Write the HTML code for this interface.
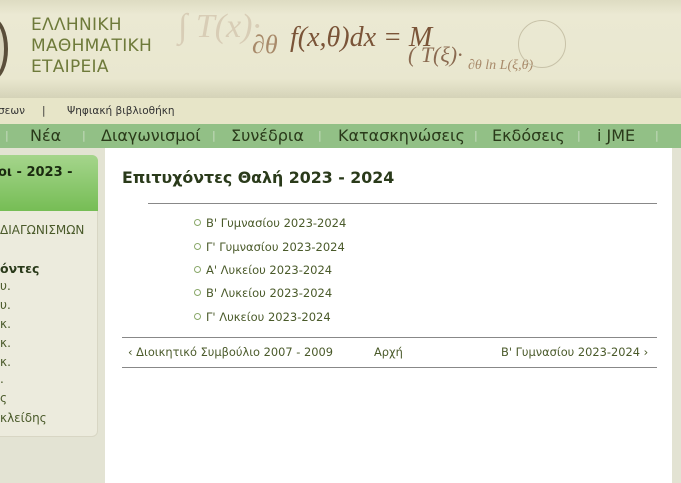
<!DOCTYPE html>
<html><head><meta charset="utf-8"><style>
*{margin:0;padding:0;box-sizing:border-box}
body{width:681px;height:483px;overflow:hidden;background:#e3e3d3;font-family:"DejaVu Sans","Liberation Sans",sans-serif;position:relative}
.hdr{position:absolute;left:0;top:0;width:681px;height:98px;background:linear-gradient(180deg,#dedcc2 0%,#ebe9d3 15%,#e9e7cf 80%,#d5d3b8 100%)}
.logo{position:absolute;left:-22px;top:18px;width:30px;height:62px;border-radius:50%;border:4px solid #5a4e3a;background:#d8d4bc}
.title{position:absolute;left:31px;top:15px;color:#6e7a3a;font-size:17px;line-height:21px;font-family:"DejaVu Sans",sans-serif;letter-spacing:.3px}
.f{position:absolute;font-family:"Liberation Serif",serif;font-style:italic;color:#7a5a40}
.sub{position:absolute;left:0;top:98px;width:681px;height:26px;background:#e7e5c8;font-size:10.5px;color:#333;line-height:26px}
.nav{position:absolute;left:0;top:124px;width:681px;height:24px;background:#92c086;font-size:16px;color:#2a3a1a;line-height:24px}
.nav span{position:absolute;top:0}
.sep{color:#c8dcc0;font-size:11px}
.side{position:absolute;left:-10px;top:155px;width:108px;height:282px;background:#ecebdd;border:1px solid #d8d6c4;border-radius:6px}
.sideh{position:absolute;left:0;top:155px;width:98px;height:56px;background:linear-gradient(#a5d58c,#76bd55);border-radius:0 6px 0 0;font-weight:bold;font-size:13px;color:#1a2a10;padding:10px 0 0 0}
.sl{position:absolute;left:0;font-size:12px;color:#4a5a2a}
.main{position:absolute;left:105px;top:148px;width:567px;height:335px;background:#fff}
h1{position:absolute;left:122px;top:168px;font-size:15.8px;font-weight:bold;color:#2a3a1a;font-family:"DejaVu Sans",sans-serif}
.hr{position:absolute;height:1px;background:#888}
.li{position:absolute;left:194px;font-size:11.5px;color:#4a5a2a}
.li i{display:inline-block;width:7px;height:7px;border:1.5px solid #8aa86a;border-radius:50%;margin-right:5px;vertical-align:1px}
.pn{position:absolute;top:345px;font-size:11.4px;color:#4a5a2a}
</style></head><body>
<div class="hdr">
<div class="logo"></div>
<div class="title">ΕΛΛΗΝΙΚΗ<br>ΜΑΘΗΜΑΤΙΚΗ<br>ΕΤΑΙΡΕΙΑ</div>
<div class="f" style="left:178px;top:8px;font-size:34px;color:#d8cdb6">∫ T(x)·</div>
<div class="f" style="left:252px;top:30px;font-size:26px;color:#a88a6a">∂θ</div>
<div class="f" style="left:290px;top:22px;font-size:28px;color:#7a5438">f(x,θ)dx = M</div>
<div class="f" style="left:408px;top:42px;font-size:22px;color:#8a6a50">( T(ξ)·</div>
<div class="f" style="left:468px;top:58px;font-size:14px;color:#a88a6a">∂θ ln L(ξ,θ)</div>
<div style="position:absolute;left:518px;top:20px;width:48px;height:48px;border:1px solid #c8c2a8;border-radius:50%"></div>
</div>
<div class="sub"><span style="position:absolute;left:-2px">σεων</span><span style="position:absolute;left:42px">|</span><span style="position:absolute;left:67px">Ψηφιακή βιβλιοθήκη</span></div>
<div class="nav">
<span class="sep" style="left:5px">|</span><span style="left:30px">Νέα</span><span class="sep" style="left:82px">|</span><span style="left:101px">Διαγωνισμοί</span><span class="sep" style="left:212px">|</span><span style="left:231px">Συνέδρια</span><span class="sep" style="left:318px">|</span><span style="left:338px">Κατασκηνώσεις</span><span class="sep" style="left:474px">|</span><span style="left:492px">Εκδόσεις</span><span class="sep" style="left:577px">|</span><span style="left:597px">i JME</span><span class="sep" style="left:655px">|</span>
</div>
<div class="side"></div>
<div class="sideh"><div style="margin-left:-2px">οι - 2023 -</div></div>
<div class="sl" style="top:223px">ΔΙΑΓΩΝΙΣΜΩΝ</div>
<div class="sl" style="top:261px;font-weight:bold;color:#2a3a1a;font-size:12.5px">όντες</div>
<div class="sl" style="top:279px">υ.</div>
<div class="sl" style="top:298px">υ.</div>
<div class="sl" style="top:317px">κ.</div>
<div class="sl" style="top:336px">κ.</div>
<div class="sl" style="top:355px">κ.</div>
<div class="sl" style="top:372px">.</div>
<div class="sl" style="top:391px">ς</div>
<div class="sl" style="top:411px">κλείδης</div>
<div class="main"></div>
<h1>Επιτυχόντες Θαλή 2023 - 2024</h1>
<div class="hr" style="left:148px;top:203px;width:509px"></div>
<div class="li" style="top:216px"><i></i>Β' Γυμνασίου 2023-2024</div>
<div class="li" style="top:240px"><i></i>Γ' Γυμνασίου 2023-2024</div>
<div class="li" style="top:263px"><i></i>Α' Λυκείου 2023-2024</div>
<div class="li" style="top:286px"><i></i>Β' Λυκείου 2023-2024</div>
<div class="li" style="top:310px"><i></i>Γ' Λυκείου 2023-2024</div>
<div class="hr" style="left:122px;top:337px;width:535px"></div>
<div class="pn" style="left:128px">‹ Διοικητικό Συμβούλιο 2007 - 2009</div>
<div class="pn" style="left:374px">Αρχή</div>
<div class="pn" style="left:501px">Β' Γυμνασίου 2023-2024 ›</div>
<div class="hr" style="left:122px;top:367px;width:535px"></div>
</body></html>
